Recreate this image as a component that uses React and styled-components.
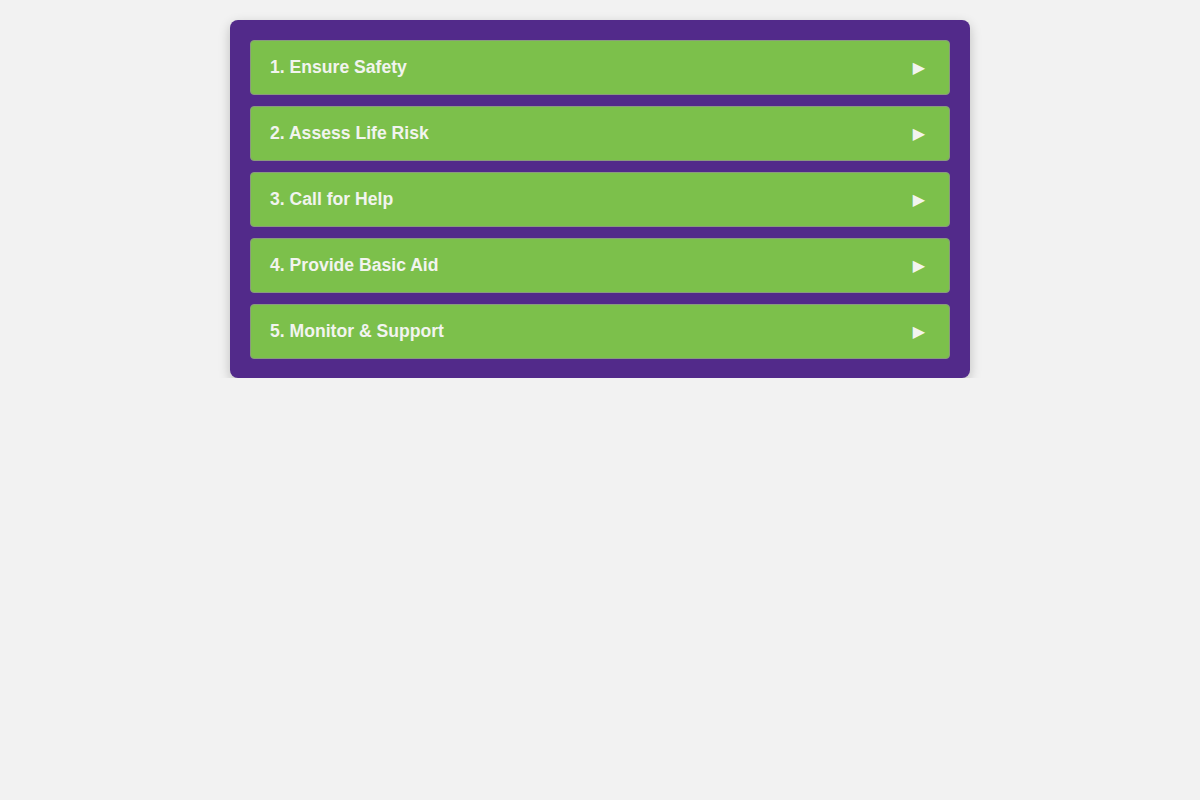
import React from "react";
import styled, { createGlobalStyle } from "styled-components";

const GlobalStyle = createGlobalStyle`
  body {
    margin: 0;
    background: #f2f2f2;
    font-family: "Liberation Sans", Arial, sans-serif;
  }
`;

const Page = styled.div`
  display: flex;
  justify-content: center;
  padding-top: 20px;
`;

const Panel = styled.div`
  width: 740px;
  box-sizing: border-box;
  padding: 20px 20px 19px;
  background: #522a8a;
  border-radius: 8px;
  box-shadow: 0 4px 12px rgba(0, 0, 0, 0.22);
  display: flex;
  flex-direction: column;
  gap: 11px;
`;

const Step = styled.button`
  height: 55px;
  box-sizing: border-box;
  display: flex;
  align-items: center;
  justify-content: space-between;
  padding: 0 20px 0 19px;
  background: #7cc04b;
  border: 1px solid #8a9a7e;
  border-radius: 4px;
  color: #f2f4ef;
  font-family: inherit;
  font-size: 17.6px;
  font-weight: bold;
  cursor: pointer;
`;

const Arrow = styled.span`
  font-family: "DejaVu Sans", sans-serif;
  font-size: 16px;
  margin-right: 4px;
`;

const steps = [
  "1. Ensure Safety",
  "2. Assess Life Risk",
  "3. Call for Help",
  "4. Provide Basic Aid",
  "5. Monitor & Support",
];

const App = () => {
  return (
    <>
      <GlobalStyle />
      <Page>
        <Panel>
          {steps.map((s) => (
            <Step key={s}>
              <span>{s}</span>
              <Arrow>▶</Arrow>
            </Step>
          ))}
        </Panel>
      </Page>
    </>
  );
};

export default App;
